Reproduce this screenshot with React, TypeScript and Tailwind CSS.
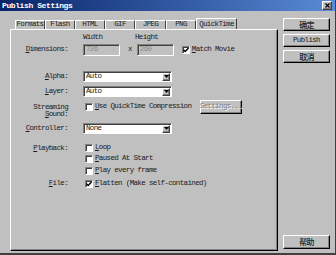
import type { ReactNode } from "react";

const sunken =
  "border border-t-[#808080] border-l-[#808080] border-r-white border-b-white shadow-[inset_1px_1px_0_#404040]";
const raised =
  "border border-t-white border-l-white border-r-[#404040] border-b-[#404040] shadow-[inset_-1px_-1px_0_#808080]";
const btn =
  "flex items-center justify-center border border-t-white border-l-white border-r-black border-b-black shadow-[inset_-1px_-1px_0_#808080]";
const cjk = "font-['Noto_Sans_CJK_SC',sans-serif] text-[8px] font-medium";

function Mn({ text }: { text: string }) {
  return (
    <>
      <span className="underline underline-offset-[1px]">{text[0]}</span>
      {text.slice(1)}
    </>
  );
}

function Label({ children, className = "" }: { children: ReactNode; className?: string }) {
  return <div className={`mr-[15px] w-[57px] shrink-0 text-right ${className}`}>{children}</div>;
}

function CheckBox({ checked, label }: { checked?: boolean; label: string }) {
  return (
    <div className="ml-[2px] flex h-[8px] items-center gap-[2px]">
      <span className={`flex h-[8px] w-[8px] shrink-0 items-center justify-center bg-white ${sunken}`}>
        {checked ? (
          <svg width="6" height="6" viewBox="0 0 6 6">
            <path d="M0.5 2.8 L2.2 4.5 L5.5 1" stroke="black" strokeWidth="1.4" fill="none" />
          </svg>
        ) : null}
      </span>
      <span className="whitespace-nowrap">
        <Mn text={label} />
      </span>
    </div>
  );
}

function Select({ value }: { value: string }) {
  return (
    <div className={`flex h-[11px] w-[89px] items-center bg-white pl-[2px] ${sunken}`}>
      <span className="flex-1">{value}</span>
      <span className={`mr-[1px] flex h-[8px] w-[8px] items-center justify-center bg-[#c0c0c0] ${raised}`}>
        <svg width="5" height="3" viewBox="0 0 5 3">
          <path d="M0 0h5L2.5 3z" fill="black" />
        </svg>
      </span>
    </div>
  );
}

function Tab({ label, w, active }: { label: string; w: string; active?: boolean }) {
  if (active) {
    return (
      <div
        className={`-mb-px flex h-[12px] items-center justify-center border-l border-t border-r border-t-white border-l-white border-r-[#404040] bg-[#c0c0c0] ${w}`}
      >
        {label}
      </div>
    );
  }
  return (
    <div
      className={`flex h-[9px] items-center justify-center border-l border-t border-r border-t-white border-l-white border-r-[#404040] ${w}`}
    >
      {label}
    </div>
  );
}

function DimInput({ value }: { value: string }) {
  return (
    <div className={`flex h-[12px] w-[37px] items-center bg-[#c0c0c0] pl-[2px] text-[#8c8c8c] ${sunken}`}>
      {value}
    </div>
  );
}

export default function App() {
  return (
    <div className="flex h-[255px] w-[336px] flex-col overflow-hidden border-b-2 border-r border-b-[#404040] border-r-[#404040] bg-[#c0c0c0] font-['Liberation_Mono',monospace] text-[7.5px] leading-none tracking-[-0.65px] text-[#1c1c1c]">
      <div className="flex h-[11px] shrink-0 items-center bg-gradient-to-r from-[#0a246a] to-[#5a8bd6] pl-[2px] pr-[3px]">
        <span className="flex-1 text-[8px] font-bold tracking-[-0.4px] text-white">Publish Settings</span>
        <span className={`flex h-[9px] w-[10px] items-center justify-center bg-[#c0c0c0] ${raised}`}>
          <svg width="5" height="5" viewBox="0 0 5 5">
            <path d="M0.5 0.5L4.5 4.5M4.5 0.5L0.5 4.5" stroke="black" strokeWidth="1.2" />
          </svg>
        </span>
      </div>

      <div className="flex flex-1">
        <div className="ml-[10px] mt-[7px] flex w-[268px] flex-col">
          <div className="flex h-[11px] items-end pl-[5px]">
            <Tab label="Formats" w="w-[30px]" />
            <Tab label="Flash" w="w-[30px]" />
            <Tab label="HTML" w="w-[30px]" />
            <Tab label="GIF" w="w-[30px]" />
            <Tab label="JPEG" w="w-[31px]" />
            <Tab label="PNG" w="w-[30px]" />
            <Tab label="QuickTime" w="w-[41px]" active />
          </div>
          <div className="flex h-[222px] flex-col border border-t-white border-l-white border-r-black border-b-black shadow-[inset_-1px_-1px_0_#808080]">
            <div className="mt-[4px] flex h-[7px] items-center">
              <div className="ml-[72px] w-[52px]">Width</div>
              <div>Height</div>
            </div>
            <div className="mt-[3px] flex h-[12px] items-center">
              <Label>
                <Mn text="Dimensions:" />
              </Label>
              <DimInput value="726" />
              <span className="ml-[8px] mr-[5px]">x</span>
              <DimInput value="260" />
              <div className="ml-[6px]">
                <CheckBox checked label="Match Movie" />
              </div>
            </div>
            <div className="mt-[15px] flex h-[11px] items-center">
              <Label>
                <Mn text="Alpha:" />
              </Label>
              <Select value="Auto" />
            </div>
            <div className="mt-[4px] flex h-[11px] items-center">
              <Label>
                <Mn text="Layer:" />
              </Label>
              <Select value="Auto" />
            </div>
            <div className="mt-[3px] flex h-[18px] items-start">
              <Label className="pt-[4px] leading-[7px]">
                Streaming
                <br />
                <Mn text="Sound:" />
              </Label>
              <div className="flex h-[14px] items-center">
                <div className="w-[117px]">
                  <CheckBox label="Use QuickTime Compression" />
                </div>
                <div
                  className={`flex h-[14px] w-[42px] items-center justify-center text-[#808080] [text-shadow:1px_1px_0_#ffffff] ${btn}`}
                >
                  Settings...
                </div>
              </div>
            </div>
            <div className="mt-[5px] flex h-[11px] items-center">
              <Label>
                <Mn text="Controller:" />
              </Label>
              <Select value="None" />
            </div>
            <div className="mt-[10px] flex">
              <Label className="leading-[8px]">
                <Mn text="Playback:" />
              </Label>
              <div className="flex flex-col">
                <CheckBox label="Loop" />
                <div className="mt-[3px]">
                  <CheckBox label="Paused At Start" />
                </div>
                <div className="mt-[4px]">
                  <CheckBox label="Play every frame" />
                </div>
              </div>
            </div>
            <div className="mt-[5px] flex h-[8px] items-center">
              <Label>
                <Mn text="File:" />
              </Label>
              <CheckBox checked label="Flatten (Make self-contained)" />
            </div>
          </div>
        </div>

        <div className="ml-[5px] mt-[7px] flex w-[47px] flex-col pb-[4px]">
          <div className={`h-[13px] ${btn} ${cjk}`}>确定</div>
          <div className={`mt-[3px] h-[13px] ${btn}`}>Publish</div>
          <div className={`mt-[3px] h-[13px] ${btn} ${cjk}`}>取消</div>
          <div className="flex-1" />
          <div className={`h-[14px] ${btn} ${cjk}`}>帮助</div>
        </div>
      </div>
    </div>
  );
}
